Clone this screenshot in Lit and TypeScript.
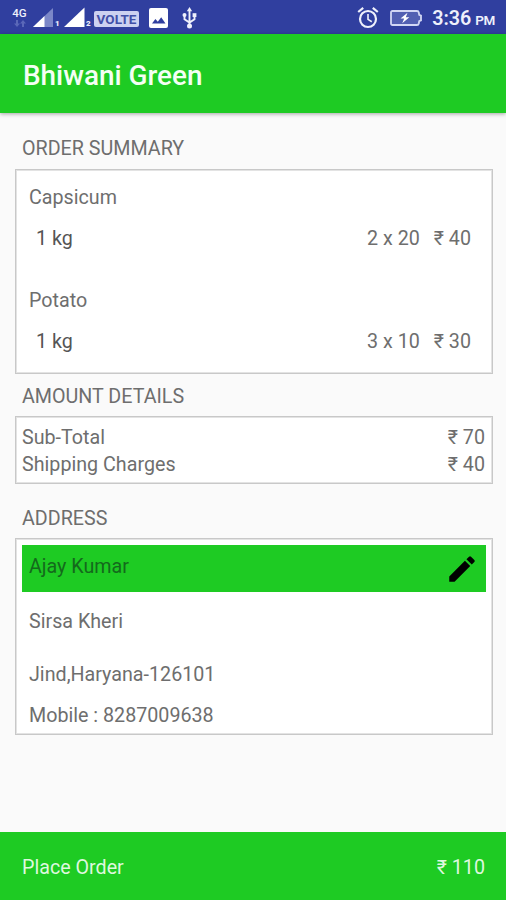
import { LitElement, html, css } from "lit";
import { customElement, property } from "lit/decorators.js";

interface Item {
  name: string;
  unit: string;
  qty: string;
  price: string;
}

const items: Item[] = [
  { name: "Capsicum", unit: "1 kg", qty: "2 x 20", price: "₹ 40" },
  { name: "Potato", unit: "1 kg", qty: "3 x 10", price: "₹ 30" },
];

const charges = [
  { label: "Sub-Total", value: "₹ 70" },
  { label: "Shipping Charges", value: "₹ 40" },
];

@customElement("status-bar")
export class StatusBar extends LitElement {
  static styles = css`
    :host {
      display: flex;
      align-items: flex-start;
      height: 34px;
      box-sizing: border-box;
      padding: 6px 11px 0 11px;
      background: #303f9f;
      color: #eef0fb;
    }
    svg {
      display: block;
      flex: none;
    }
    .net {
      width: 17px;
      display: flex;
      flex-direction: column;
      align-items: center;
      font-size: 11.5px;
      line-height: 14px;
      font-weight: 500;
    }
    .signal {
      margin-left: 5px;
    }
    .signal.second {
      margin-left: 4px;
    }
    .sim {
      font-size: 8px;
      font-weight: 900;
      line-height: 8px;
      margin: 14px 0 0 1px;
      width: 5px;
    }
    .volte {
      margin: 5px 0 0 3px;
      width: 45px;
      height: 16px;
      border-radius: 2px;
      background: #ccd1f1;
      color: #4150a8;
      font-size: 13.5px;
      font-weight: 700;
      line-height: 16px;
      text-align: center;
    }
    .picture {
      margin: 2px 0 0 10px;
    }
    .usb {
      margin: 1px 0 0 14px;
    }
    .spacer {
      flex: 1;
    }
    .battery {
      margin: 4px 0 0 11px;
    }
    .clock {
      margin-left: 10px;
      font-size: 19.7px;
      line-height: 25px;
      font-weight: 600;
      white-space: nowrap;
    }
    .clock small {
      font-size: 13.5px;
      margin-left: 4px;
      letter-spacing: -0.4px;
    }
  `;

  render() {
    return html`
      <div class="net">
        <span>4G</span>
        <svg width="12" height="7" viewBox="0 0 12 7" fill="#5a68b8">
          <path d="M3 7L0 3.5H2V0H4V3.5H6ZM9 0L12 3.5H10V7H8V3.5H6Z" />
        </svg>
      </div>
      <svg class="signal" width="21" height="22" viewBox="0 0 21 22">
        <path d="M20 2V21H0Z" fill="#7b87c8" />
        <path d="M11.5 10.1V21H0Z" fill="#fff" />
      </svg>
      <span class="sim">1</span>
      <svg class="signal second" width="21" height="22" viewBox="0 0 21 22">
        <path d="M20.5 1.5V21H0Z" fill="#fff" />
      </svg>
      <span class="sim">2</span>
      <span class="volte">VOLTE</span>
      <svg class="picture" width="19" height="20" viewBox="0 0 19 20">
        <rect width="19" height="20" rx="2" fill="#fff" />
        <path d="M3 15.5L6.4 11L8.8 13.8L12.2 9.2L16.5 15.5Z" fill="#303f9f" />
      </svg>
      <svg class="usb" width="15" height="22" viewBox="0 0 15 22" fill="none" stroke="#eef0fb" stroke-width="1.9">
        <path d="M7.5 4V19M2.5 8V12.2L7.5 15.5L12.5 12.2V9" />
        <path d="M7.5 0L10.2 4.2H4.8Z" fill="#eef0fb" stroke="none" />
        <circle cx="2.5" cy="8" r="2" fill="#eef0fb" stroke="none" />
        <rect x="10.6" y="6.2" width="3.8" height="3.8" fill="#eef0fb" stroke="none" />
        <circle cx="7.5" cy="19" r="2.5" fill="#eef0fb" stroke="none" />
      </svg>
      <span class="spacer"></span>
      <svg width="22" height="23" viewBox="0 0 22 23" fill="none" stroke="#eef0fb">
        <circle cx="11" cy="13" r="8" stroke-width="2.2" />
        <path d="M11 8V13.4L14.8 15.8" stroke-width="1.6" />
        <path d="M1.2 6L6.2 1.8M20.8 6L15.8 1.8" stroke-width="2.2" />
      </svg>
      <svg class="battery" width="32" height="16" viewBox="0 0 32 16">
        <path
          d="M2.5 1H27Q28.5 1 28.8 2.5L29.2 4.8L31 5.6V10.4L29.2 11.2L28.8 13.5Q28.5 15 27 15H2.5Q1 15 1 13.5V2.5Q1 1 2.5 1Z"
          fill="#5260b2"
          stroke="#d2d7f4"
          stroke-width="1.8"
        />
        <path d="M17.5 2.8L10.5 8.6H14.2L12.2 13.2L19.4 7.2H15.8Z" fill="#fff" />
      </svg>
      <span class="clock">3:36<small>PM</small></span>
    `;
  }
}

@customElement("order-item")
export class OrderItem extends LitElement {
  @property({ attribute: false }) item!: Item;

  static styles = css`
    :host {
      display: block;
    }
    .row {
      display: flex;
      margin-top: 14px;
      padding: 0 8px 0 7px;
    }
    .unit {
      flex: 1;
      color: #555;
    }
    .qty {
      margin-right: 14px;
    }
  `;

  render() {
    const { name, unit, qty, price } = this.item;
    return html`
      <div>${name}</div>
      <div class="row">
        <span class="unit">${unit}</span>
        <span class="qty">${qty}</span>
        <span>${price}</span>
      </div>
    `;
  }
}

@customElement("app-root")
export class AppRoot extends LitElement {
  static styles = css`
    :host {
      display: flex;
      flex-direction: column;
      width: 506px;
      height: 900px;
      overflow: hidden;
      background: #fafafa;
      color: #6e6e6e;
      font: 400 19.7px/27px Roboto, "Noto Sans", sans-serif;
    }
    .appbar {
      flex: none;
      display: flex;
      align-items: center;
      height: 79px;
      box-sizing: border-box;
      padding: 3px 23px 0;
      background: #1ecb23;
      color: #f4fff4;
      font-size: 27.9px;
      font-weight: 500;
      box-shadow: 0 1px 4px rgba(0, 0, 0, 0.35);
    }
    main {
      flex: 1;
      padding: 22px 13px 0 15px;
    }
    h2 {
      margin: 0 0 7px 7px;
      font: inherit;
    }
    .box {
      box-sizing: border-box;
      background: #fff;
      border: 1px solid #c8c8c8;
      box-shadow: inset 0 0 0 1px #e3e3e3;
    }
    .items {
      height: 205px;
      padding: 14px 13px 0 13px;
      display: flex;
      flex-direction: column;
      gap: 35px;
      margin-bottom: 9px;
    }
    .amounts {
      height: 68px;
      padding: 7px 7px 0 6px;
      margin: -1px 0 21px;
    }
    .charge {
      display: flex;
      justify-content: space-between;
    }
    .address {
      height: 197px;
      padding: 6px;
      margin-top: -1px;
    }
    .person {
      display: flex;
      justify-content: space-between;
      height: 47px;
      box-sizing: border-box;
      padding: 8px 7px 0 7px;
      background: #1ecb23;
      color: #14691c;
    }
    .person svg {
      margin-top: -1px;
    }
    .line {
      padding-left: 7px;
      margin-top: 16px;
    }
    .line.city {
      margin-top: 26px;
    }
    .line.phone {
      margin-top: 14px;
    }
    footer {
      flex: none;
      display: flex;
      justify-content: space-between;
      align-items: center;
      height: 68px;
      box-sizing: border-box;
      padding: 3px 21px 0 22px;
      background: #1ecb23;
      color: #def8df;
    }
  `;

  render() {
    return html`
      <status-bar></status-bar>
      <header class="appbar">Bhiwani Green</header>
      <main>
        <h2>ORDER SUMMARY</h2>
        <section class="box items">
          ${items.map((item) => html`<order-item .item=${item}></order-item>`)}
        </section>
        <h2>AMOUNT DETAILS</h2>
        <section class="box amounts">
          ${charges.map(
            (c) => html`<div class="charge"><span>${c.label}</span><span>${c.value}</span></div>`
          )}
        </section>
        <h2>ADDRESS</h2>
        <section class="box address">
          <div class="person">
            <span>Ajay Kumar</span>
            <svg width="34" height="34" viewBox="0 0 24 24" fill="#000">
              <path
                d="M3 17.25V21h3.75L17.81 9.94l-3.75-3.75L3 17.25zM20.71 7.04a1 1 0 0 0 0-1.41l-2.34-2.34a1 1 0 0 0-1.41 0l-1.83 1.83 3.75 3.75 1.83-1.83z"
              />
            </svg>
          </div>
          <div class="line">Sirsa Kheri</div>
          <div class="line city">Jind,Haryana-126101</div>
          <div class="line phone">Mobile : 8287009638</div>
        </section>
      </main>
      <footer><span>Place Order</span><span>₹ 110</span></footer>
    `;
  }
}
